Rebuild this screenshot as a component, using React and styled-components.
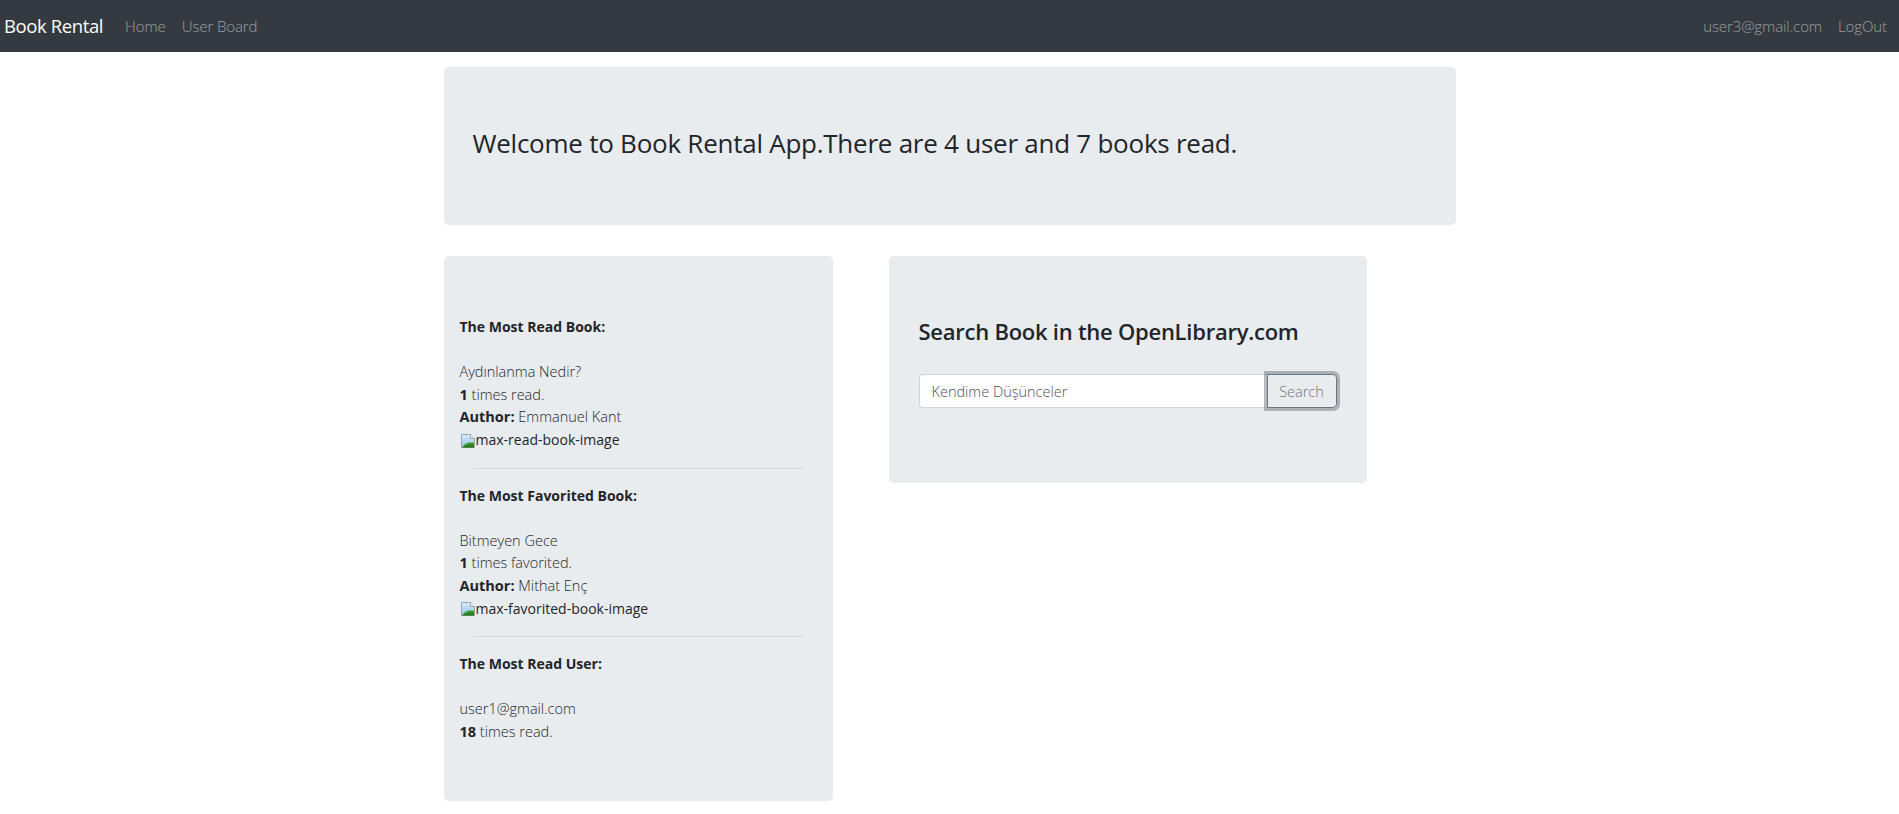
import React, { useState } from 'react';
import styled, { createGlobalStyle } from 'styled-components';

const GlobalStyle = createGlobalStyle`
  body {
    margin: 0;
    background: #fff;
    color: #212529;
    font-family: "Open Sans", "Noto Sans", sans-serif;
    font-size: 15px;
    line-height: 1.5;
  }
  * { box-sizing: border-box; }
`;

const stats = {
  userCount: 4,
  bookCount: 7,
  readBook: { name: 'Aydınlanma Nedir?', count: 1, author: 'Emmanuel Kant' },
  favBook: { name: 'Bitmeyen Gece', count: 1, author: 'Mithat Enç' },
  readUser: { mail: 'user1@gmail.com', count: 18 },
};

const BrokenImage = ({ alt }) => (
  <ImgAlt>
    <svg width="16" height="16" viewBox="0 0 16 16">
      <defs>
        <linearGradient id="sky" x1="0" y1="0" x2="0" y2="1">
          <stop offset="0" stopColor="#d9ecfb" />
          <stop offset="1" stopColor="#8fc3ee" />
        </linearGradient>
      </defs>
      <path d="M1.5 1.5h9l4 4v9h-13z" fill="url(#sky)" stroke="#9aa4ad" />
      <path d="M10.5 1.5v4h4" fill="#eef3f7" stroke="#9aa4ad" />
      <path d="M2 14.5 C5 10 8 9 14 9.5 V14.5 Z" fill="#3d9a2e" />
      <path d="M2 14.5 C6 12 9 11.5 14 12 V14.5 Z" fill="#2a7d1f" />
    </svg>
    {alt}
  </ImgAlt>
);

const App = () => {
  const [query, setQuery] = useState('Kendime Düşünceler');

  return (
    <>
      <GlobalStyle />
      <Navbar>
        <NavGroup>
          <Brand href="#">Book Rental</Brand>
          <NavLink href="#">Home</NavLink>
          <NavLink href="#">User Board</NavLink>
        </NavGroup>
        <NavGroup>
          <NavLink href="#">user3@gmail.com</NavLink>
          <NavLink href="#">LogOut</NavLink>
        </NavGroup>
      </Navbar>

      <Main>
        <Jumbotron>
          <h3>
            Welcome to Book Rental App.There are {stats.userCount} user and {stats.bookCount} books read.
          </h3>
        </Jumbotron>

        <Row>
          <StatCard>
            <Title>The Most Read Book:</Title>
            <div>{stats.readBook.name}</div>
            <div><b>{stats.readBook.count}</b> times read.</div>
            <div><b>Author:</b> {stats.readBook.author}</div>
            <BrokenImage alt="max-read-book-image" />
            <Divider />

            <Title>The Most Favorited Book:</Title>
            <div>{stats.favBook.name}</div>
            <div><b>{stats.favBook.count}</b> times favorited.</div>
            <div><b>Author:</b> {stats.favBook.author}</div>
            <BrokenImage alt="max-favorited-book-image" />
            <Divider />

            <Title>The Most Read User:</Title>
            <div>{stats.readUser.mail}</div>
            <div><b>{stats.readUser.count}</b> times read.</div>
          </StatCard>

          <SearchCard>
            <SearchTitle>Search Book in the OpenLibrary.com</SearchTitle>
            <InputGroup>
              <SearchInput value={query} onChange={(e) => setQuery(e.target.value)} />
              <SearchButton type="button">Search</SearchButton>
            </InputGroup>
          </SearchCard>
        </Row>
      </Main>
    </>
  );
};

const Navbar = styled.nav`
  height: 52px;
  background: #343a40;
  display: flex;
  align-items: center;
  justify-content: space-between;
  padding: 0 4px 0 4px;
`;

const NavGroup = styled.div`
  display: flex;
  align-items: center;
`;

const Brand = styled.a`
  color: #fff;
  font-size: 18.5px;
  text-decoration: none;
  margin-right: 14px;
  letter-spacing: -0.4px;
`;

const NavLink = styled.a`
  color: rgba(255, 255, 255, 0.5);
  font-size: 15px;
  font-weight: 300;
  text-decoration: none;
  padding: 8px;
  letter-spacing: -0.1px;
`;

const Main = styled.main`
  width: 1012px;
  margin: 15px auto 0;
`;

const Jumbotron = styled.div`
  background: #e9ecef;
  border-radius: 5px;
  padding: 59px 29px 65px;
  margin-bottom: 31px;

  h3 {
    margin: 0;
    font-size: 26px;
    font-weight: 400;
    line-height: 34px;
    letter-spacing: -0.25px;
  }
`;

const Row = styled.div`
  display: grid;
  grid-template-columns: 389px 478px;
  column-gap: 56px;
  align-items: start;
`;

const Card = styled.div`
  background: #e9ecef;
  border-radius: 5px;
`;

const StatCard = styled(Card)`
  padding: 60px 16px 58px;
  font-weight: 300;
  line-height: 22.5px;
  font-size: 14.5px;

  b {
    font-weight: 700;
  }
`;

const Title = styled.b`
  display: block;
  margin-bottom: 22.5px;
  font-size: 14px;
`;

const ImgAlt = styled.div`
  display: flex;
  align-items: flex-end;
  height: 23px;
  font-weight: 400;
  font-size: 14px;
  color: #212529;

  svg {
    flex: none;
    margin-bottom: 3px;
  }
`;

const Divider = styled.hr`
  margin: 16px 14px;
  border: 0;
  border-top: 1px solid rgba(0, 0, 0, 0.1);
`;

const SearchCard = styled(Card)`
  padding: 60px 30px 75px;
`;

const SearchTitle = styled.h4`
  margin: 0 0 28px;
  font-size: 22px;
  font-weight: 600;
  line-height: 30px;
  letter-spacing: -0.25px;
`;

const InputGroup = styled.div`
  display: flex;
  height: 34px;
`;

const SearchInput = styled.input`
  flex: 1;
  min-width: 0;
  height: 34px;
  border: 1px solid #ced4da;
  border-right: 0;
  border-radius: 4px 0 0 4px;
  padding: 0 12px;
  font: 300 14.5px "Open Sans", sans-serif;
  color: #495057;
  background: #fff;
  outline: none;
`;

const SearchButton = styled.button`
  width: 70px;
  height: 34px;
  border: 1px solid #6c757d;
  border-radius: 0 4px 4px 0;
  background: transparent;
  color: #6c757d;
  font: 300 14.5px "Open Sans", sans-serif;
  box-shadow: 0 0 0 3px rgba(108, 117, 125, 0.5);
  cursor: pointer;
`;

export default App;
